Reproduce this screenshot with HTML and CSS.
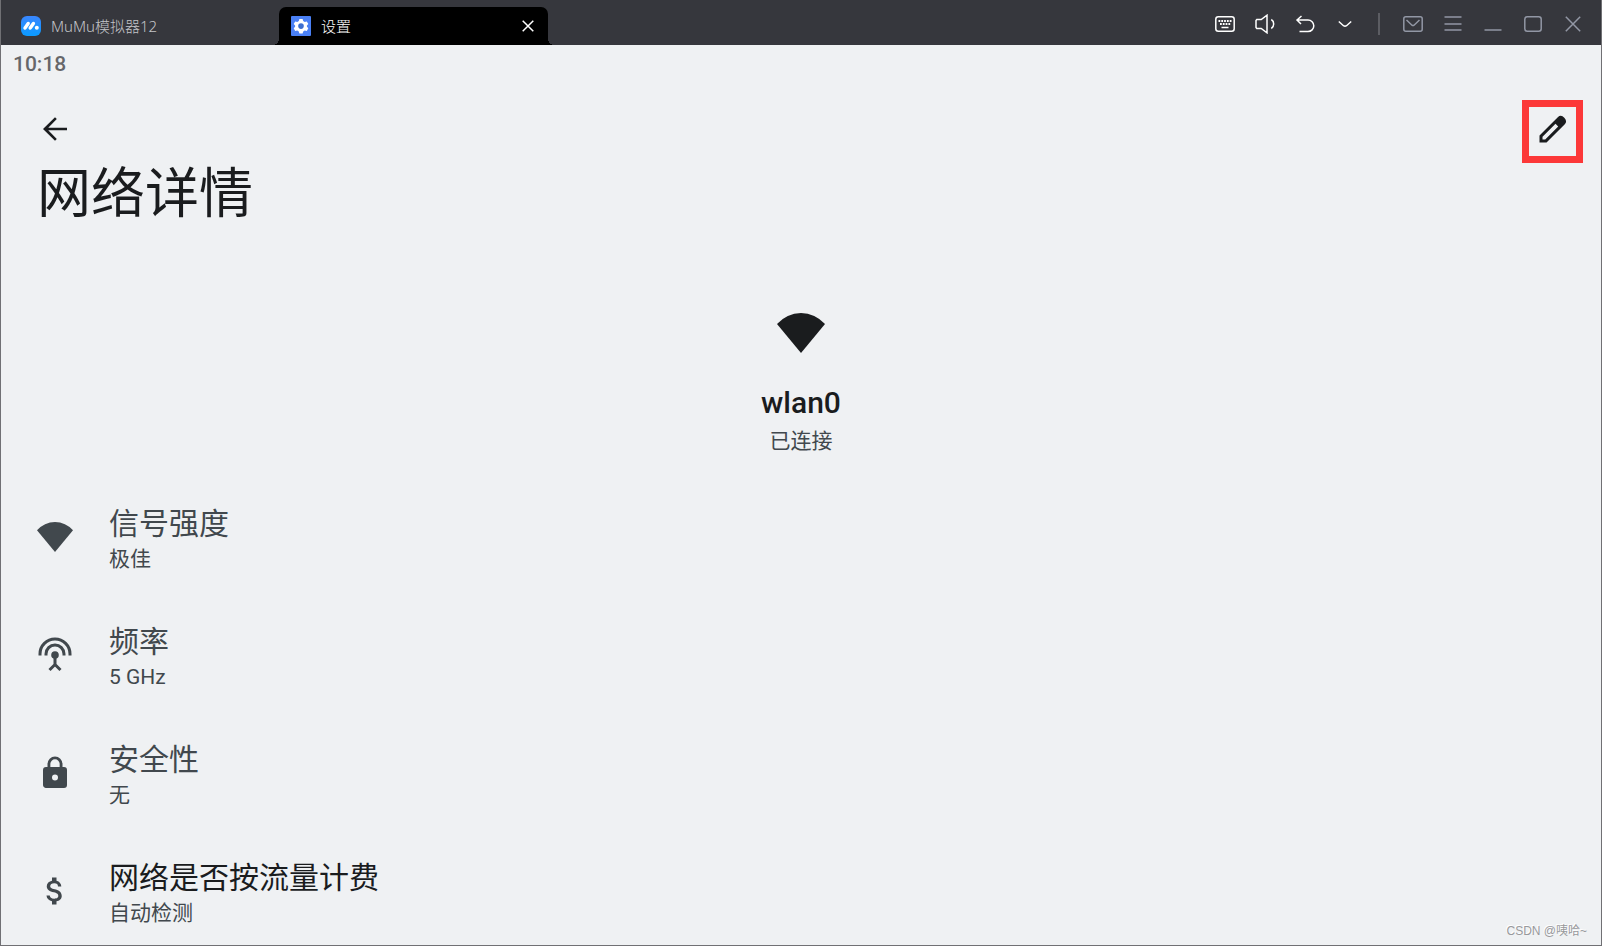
FILE: index.html
```html
<!DOCTYPE html>
<html lang="zh-CN">
<head>
    <meta charset="UTF-8">
    <meta name="viewport" content="width=device-width, initial-scale=1.0">
    <title>网络详情</title>
    <link rel="stylesheet" href="styles.css">
</head>
<body>
<div class="window">

    <header class="titlebar">
        <div class="app-name">
            <svg width="20" height="20" viewBox="0 0 20 20">
                <defs>
                    <linearGradient id="logo" x1="0" y1="0" x2="0" y2="1">
                        <stop offset="0" stop-color="#3a86ff"/>
                        <stop offset="1" stop-color="#0a9bff"/>
                    </linearGradient>
                </defs>
                <rect width="20" height="20" rx="6" fill="url(#logo)"/>
                <path d="M4 12l3.200-4.500M9.200 12l3.200-4.500" stroke="#fff" stroke-width="3.400" stroke-linecap="round"/>
                <circle cx="15.800" cy="11.700" r="2" fill="#fff"/>
            </svg>
            <span>MuMu模拟器12</span>
        </div>
        <div class="tab">
            <svg width="20" height="20" viewBox="0 0 20 20">
                <rect width="20" height="20" rx="1" fill="#4a80f5"/>
                <path d="M8.400 3h3.200l.6 2 1.500.9 2.100-.5 1.500 2.700-1.400 1.400v1.300l1.400 1.500-1.500 2.700-2.100-.5-1.500.9-.6 2H8.400l-.6-2-1.500-.9-2.100.5-1.500-2.700 1.400-1.500V9.500L2.700 8.100l1.500-2.700 2.100.5L7.800 5z" fill="#fff"/>
                <circle cx="10" cy="10.100" r="2.800" fill="#3d6fd0"/>
            </svg>
            <span>设置</span>
            <button class="tab-close" aria-label="关闭标签">
                <svg width="12" height="12" viewBox="0 0 12 12"><path d="M.7.7l10.600 10.600M11.300.7L.7 11.300" stroke="#fff" stroke-width="1.500"/></svg>
            </button>
        </div>
        <div class="controls">
            <button aria-label="键盘">
                <svg width="20" height="16" viewBox="0 0 20 16"><rect x=".8" y=".8" width="18.400" height="14.400" rx="2.500"/><path d="M3.500 5h13M5 8h11" stroke-width="2" stroke-dasharray="1.800 1"/><path d="M6.500 11.500h7"/></svg>
            </button>
            <button aria-label="音量">
                <svg width="20" height="20" viewBox="0 0 20 20"><path d="M1.800 5.500h4.400L12 1.200v17.600l-5.800-4.300H1.800L1 13.500v-7zM16.300 5.500c3.200 2 3.200 7 0 9"/></svg>
            </button>
            <button aria-label="返回">
                <svg width="20" height="18" viewBox="0 0 20 18"><path d="M6.500 1L2 5l4 4M2 5H13a5.800 5.800 0 0 1 0 11.600H4.500"/></svg>
            </button>
            <button aria-label="更多">
                <svg width="14" height="8" viewBox="0 0 14 8"><path d="M.8 1.500l4.700 4.200q1.500 1.200 3 0l4.700-4.200"/></svg>
            </button>
            <span class="divider"></span>
            <button class="dim" aria-label="消息">
                <svg width="20" height="16" viewBox="0 0 20 16"><rect x=".8" y=".8" width="18.400" height="14.400" rx="2"/><path d="M3.500 4l5.500 5.200q1 .8 2 0L16.500 4"/></svg>
            </button>
            <button class="dim" aria-label="菜单">
                <svg width="18" height="16" viewBox="0 0 18 16"><path d="M.5 1h17M.5 8h17M.5 14h17"/></svg>
            </button>
            <button class="dim" aria-label="最小化">
                <svg width="18" height="16" viewBox="0 0 18 16"><path d="M.5 14h17"/></svg>
            </button>
            <button class="dim" aria-label="最大化">
                <svg width="18" height="16" viewBox="0 0 18 16"><rect x=".8" y=".8" width="16.400" height="14.400" rx="2.500"/></svg>
            </button>
            <button class="dim" aria-label="关闭">
                <svg width="16" height="16" viewBox="0 0 16 16"><path d="M.8.8l14.400 14.400M15.200.8L.8 15.200"/></svg>
            </button>
        </div>
    </header>

    <main class="screen">
        <div class="status">10:18</div>

        <div class="toolbar">
            <button class="back" aria-label="返回">
                <svg width="36" height="36" viewBox="0 0 24 24"><path d="M20 11.100H7.500l5.700-5.700L12 4.100 4 12l8 7.900 1.200-1.300-5.700-5.700H20z" fill="#1a1c1e"/></svg>
            </button>
            <button class="edit" aria-label="修改">
                <svg width="36" height="36" viewBox="0 0 36 36"><path d="M4.500 31.500v-7L22.800 6.200q3.200-3 6.500.500t.5 6.500L11.500 31.500zM7.500 28.500h2.700L23.200 15.500l-2.700-2.700L7.500 25.800z" fill="#1a1c1e" fill-rule="evenodd"/></svg>
            </button>
        </div>
        <h1>网络详情</h1>

        <section class="network">
            <svg width="48" height="40" viewBox="0 0 48 40"><path d="M0 11A31.700 31.700 0 0 1 48 11L24 40z" fill="#1a1c1e"/></svg>
            <h2>wlan0</h2>
            <p>已连接</p>
        </section>

        <ul class="details">
            <li>
                <svg width="36" height="36" viewBox="0 0 36 36"><path d="M0 11.200A23.800 23.800 0 0 1 36 11.200L18 33z"/></svg>
                <div>
                    <h3>信号强度</h3>
                    <p>极佳</p>
                </div>
            </li>
            <li>
                <svg width="36" height="36" viewBox="0 0 36 36">
                    <path d="M3 18.500V17a15 15 0 0 1 30 0v1.500M9 18.500V17a9 9 0 0 1 18 0v1.500" fill="none" stroke="#41484d" stroke-width="3"/>
                    <circle cx="18" cy="18" r="3.800"/>
                    <path d="M18 19v8M12.500 33l5.500-5.500 5.500 5.500" fill="none" stroke="#41484d" stroke-width="3"/>
                </svg>
                <div>
                    <h3>频率</h3>
                    <p>5 GHz</p>
                </div>
            </li>
            <li>
                <svg width="36" height="36" viewBox="0 0 24 24"><path d="M18 8h-1V6A5 5 0 0 0 7 6v2H6a2 2 0 0 0-2 2v10c0 1.100.9 2 2 2h12a2 2 0 0 0 2-2V10a2 2 0 0 0-2-2zm-6 9a2 2 0 1 1 0-4 2 2 0 0 1 0 4zM8.900 8V6a3.100 3.100 0 0 1 6.200 0v2z"/></svg>
                <div>
                    <h3>安全性</h3>
                    <p>无</p>
                </div>
            </li>
            <li class="active">
                <svg width="36" height="36" viewBox="0 0 24 24"><path d="M11.800 10.900c-2.270-.59-3-1.200-3-2.150 0-1.090 1.010-1.850 2.700-1.850 1.780 0 2.440.85 2.500 2.100h2.210c-.07-1.720-1.120-3.300-3.210-3.810V3h-3v2.160c-1.940.42-3.500 1.680-3.500 3.610 0 2.310 1.910 3.460 4.700 4.130 2.500.6 3 1.480 3 2.410 0 .69-.49 1.790-2.700 1.790-2.060 0-2.870-.92-2.980-2.100h-2.200c.12 2.190 1.760 3.420 3.680 3.830V21h3v-2.150c1.950-.37 3.500-1.500 3.500-3.550 0-2.840-2.430-3.810-4.700-4.400z"/></svg>
                <div>
                    <h3>网络是否按流量计费</h3>
                    <p>自动检测</p>
                </div>
            </li>
        </ul>
    </main>

    <div class="watermark">CSDN @咦哈~</div>
</div>
</body>
</html>
```
FILE: styles.css
```css
* { box-sizing: border-box; }
body { margin: 0; font-family: Roboto, "Noto Sans CJK SC", sans-serif; background-color: #eff1f3; color: #1a1c1e; }
h1, h2, h3, p, ul { margin: 0; padding: 0; font-weight: 400; }
button { padding: 0; border: none; background: none; cursor: pointer; display: flex; align-items: center; justify-content: center; }
svg { display: block; flex: none; }

.window { position: relative; height: 100vh; display: flex; flex-direction: column; overflow: hidden; border: 1px solid #707074; border-top: none; }

/* title bar */
.titlebar { flex: none; display: flex; height: 45px; background-color: #36373d; font-family: "Noto Sans", "Noto Sans CJK SC", sans-serif; font-size: 15px; line-height: 20px; font-weight: 300; }
.app-name { display: flex; align-items: center; gap: 10px; width: 278px; padding: 7px 0 0 20px; color: #c3c4c8; }
.tab { position: relative; display: flex; align-items: center; gap: 10px; width: 269px; margin-top: 7px; padding: 0 14px 0 12px; border-radius: 7px 7px 0 0; background-color: #000; color: #fff; }
.tab::before, .tab::after { content: ""; position: absolute; bottom: 0; width: 6px; height: 6px; }
.tab::before { left: -6px; background: radial-gradient(circle at 0 0, transparent 6px, #000 6px); }
.tab::after { right: -6px; background: radial-gradient(circle at 100% 0, transparent 6px, #000 6px); }
.tab-close { margin-left: auto; }
.controls { display: flex; align-items: center; margin-left: auto; padding: 3px 8px 0 0; }
.controls button { width: 40px; height: 40px; }
.controls svg { fill: none; stroke: #fff; stroke-width: 1.5; }
.controls .dim svg { stroke: #9297a5; }
.divider { width: 2px; height: 22px; margin: 0 13px; background-color: #5c5d63; }

/* settings page */
.screen { flex: 1; min-height: 0; overflow: hidden; }
.status { padding-left: 12px; font-size: 21px; line-height: 38px; font-weight: 500; color: #66676a; }
.toolbar { display: flex; align-items: center; justify-content: space-between; padding: 17px 18px 0 36px; }
.toolbar svg { margin-bottom: 6px; }
.edit { width: 61px; height: 63px; border: 7px solid #fc3838; }
h1 { padding-left: 36px; font-size: 54px; line-height: 64px; }

.network { display: flex; flex-direction: column; align-items: center; padding-top: 86px; }
.network h2 { margin-top: 32px; font-size: 30px; line-height: 36px; font-weight: 500; }
.network p { font-size: 21px; line-height: 40px; color: #41484d; }

.details { list-style: none; padding-top: 17px; color: #41484d; }
.details li { display: flex; align-items: center; gap: 36px; height: 118px; padding-left: 36px; }
.details div { padding-top: 4px; }
.details svg { fill: #41484d; }
.details h3 { font-size: 30px; line-height: 40px; }
.details p { font-size: 21px; line-height: 30px; }
.details .active h3 { color: #1a1c1e; }

.watermark { position: absolute; right: 14px; bottom: 5px; font-family: "Liberation Sans", "Noto Sans CJK SC", sans-serif; font-size: 12px; line-height: 18px; color: #98999c; text-shadow: -1px -1px 0 #fff; }
```
